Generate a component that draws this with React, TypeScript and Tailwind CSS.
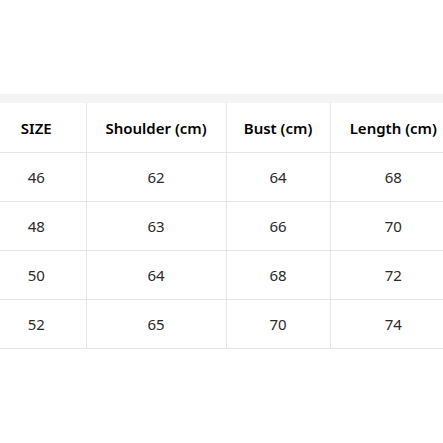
const rows = [
  ["46", "62", "64", "68"],
  ["48", "63", "66", "70"],
  ["50", "64", "68", "72"],
  ["52", "65", "70", "74"],
];

const headers = ["SIZE", "Shoulder (cm)", "Bust (cm)", "Length (cm)"];
const widths = ["w-[99px]", "w-[140px]", "w-[104px]", "w-[126px]"];

export default function App() {
  return (
    <div className="h-[443px] w-[443px] overflow-hidden bg-white font-['Noto_Sans',sans-serif]">
      <div className="mt-[94px] h-[9px] bg-[#f4f4f5]" />
      <div className="-ml-[13px] w-[469px]">
        <table className="w-full table-fixed border-collapse text-[15px]">
          <thead>
            <tr className="h-[49px] border-b border-[#e5e5e5]">
              {headers.map((h, i) => (
                <th
                  key={h}
                  className={`${widths[i]} border-[#e5e5e5] pt-px text-center font-semibold text-black ${i > 0 ? "border-l" : ""}`}
                >
                  {h}
                </th>
              ))}
            </tr>
          </thead>
          <tbody>
            {rows.map((r) => (
              <tr key={r[0]} className="h-[49px] border-b border-[#e5e5e5]">
                {r.map((v, i) => (
                  <td
                    key={i}
                    className={`border-[#e5e5e5] pt-px text-center text-[#2a2a2a] ${i > 0 ? "border-l" : ""}`}
                  >
                    {v}
                  </td>
                ))}
              </tr>
            ))}
          </tbody>
        </table>
      </div>
    </div>
  );
}
